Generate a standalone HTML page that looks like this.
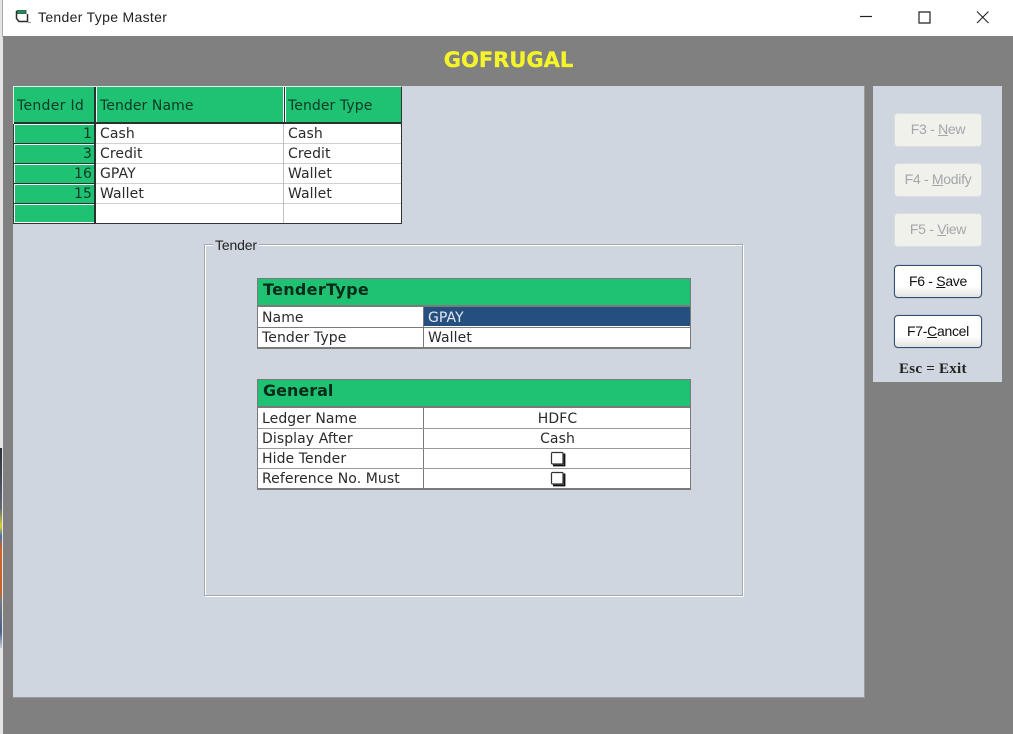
<!DOCTYPE html>
<html><head><meta charset="utf-8"><style>
html,body{margin:0;padding:0;width:1013px;height:734px;overflow:hidden;background:#808080}
div,span{position:absolute;box-sizing:border-box;white-space:nowrap}
.t{font:14px/18px "DejaVu Sans",sans-serif;color:#2a2a2a;height:18px;margin-top:1px;letter-spacing:.08px}
.h{color:#0f3a26}
.g{background:#1fc172}
.l{background:#d0d0d0}
.d{background:#26332c}
.m{background:#7a7a7a}
.b{left:895px;width:86px;height:32px;border-radius:3px;font:14px/31px "Liberation Sans",sans-serif;text-align:center;letter-spacing:-.3px}
.off{background:#f1f1ec;color:#a3a6aa;box-shadow:0 0 0 1px #dcdde0}
.on{left:894px;width:88px;height:33px;border-radius:4px;background:linear-gradient(#fff 65%,#e2e2de);color:#111;border:1px solid #2f4f75;box-shadow:0 0 1px #6d7f95}
u{text-underline-offset:1px}
</style></head><body>
<!-- title bar -->
<div style="left:0;top:0;width:1013px;height:36px;background:#fff"></div>
<div style="left:0;top:0;width:3px;height:734px;background:#e4e4e4"></div>
<div style="left:2px;top:0;width:1px;height:37px;background:#a8a8a8"></div>
<svg style="position:absolute;left:15px;top:9px" width="17" height="15" viewBox="0 0 17 15"><path d="M1.5 2V9.5L4 12.5H12.5V5" fill="#fff" stroke="#2b2b2b" stroke-width="1.5"/><path d="M2 1.5H11V4.5H2Z" fill="#1f8f58" stroke="#1c4a34" stroke-width=".8"/><path d="M13 13.5h3" stroke="#9a9a9a" stroke-width="1.2"/></svg>
<div style="left:38px;top:8px;font:14px/18px 'Liberation Sans',sans-serif;color:#222;letter-spacing:.32px;height:18px">Tender Type Master</div>
<svg style="position:absolute;left:855px;top:5px" width="150" height="26" viewBox="0 0 150 26"><path d="M5 11.5H17" stroke="#222" stroke-width="1.2"/><path d="M64 7h11v11H64Z" fill="none" stroke="#222" stroke-width="1.2"/><path d="M122 6.5l11.5 11.5M133.5 6.5L122 18" stroke="#222" stroke-width="1.1"/></svg>
<!-- left edge artefacts -->
<div style="left:0;top:448px;width:2px;height:200px;background:linear-gradient(#2b3038 0,#3d4650 12%,#5f6872 30%,#d8d030 39%,#4c6ea8 44%,#c9662a 50%,#c8642a 72%,#7a7a7a 76%,#46628f 92%,#ccc 100%)"></div>
<!-- heading -->
<div style="left:380px;top:47px;width:257px;text-align:center;font:bold 21px/27px 'DejaVu Sans',sans-serif;color:#f4f42a;height:27px;-webkit-text-stroke:.3px #f4f42a">GOFRUGAL</div>
<!-- panels -->
<div style="left:13px;top:86px;width:852px;height:612px;background:#d0d6df;border-right:1px solid #9a9a9a;border-bottom:1px solid #9a9a9a"></div>
<div style="left:873px;top:86px;width:129px;height:296px;background:#d0d6df"></div>
<!-- grid -->
<div style="left:13px;top:86px;width:389px;height:138px;background:#fff;border:1px solid #333;border-top-color:#e6ece8;border-left-color:#e6ece8"></div>
<div style="left:13px;top:124px;width:1px;height:100px;background:#2c3a33"></div>
<div class="g" style="left:14px;top:87px;width:80px;height:36px"></div>
<div class="g" style="left:97px;top:87px;width:186px;height:36px"></div>
<div class="g" style="left:286px;top:87px;width:115px;height:36px"></div>
<div class="d" style="left:14px;top:122px;width:387px;height:2px"></div>
<div class="g" style="left:15px;top:125px;width:79px;height:18px"></div>
<div class="g" style="left:15px;top:145px;width:79px;height:18px"></div>
<div class="g" style="left:15px;top:165px;width:79px;height:18px"></div>
<div class="g" style="left:15px;top:185px;width:79px;height:18px"></div>
<div class="g" style="left:15px;top:205px;width:79px;height:17px"></div>
<div class="d" style="left:14px;top:143px;width:81px;height:1px"></div>
<div class="d" style="left:14px;top:163px;width:81px;height:1px"></div>
<div class="d" style="left:14px;top:183px;width:81px;height:1px"></div>
<div class="d" style="left:14px;top:203px;width:81px;height:1px"></div>
<div class="d" style="left:94px;top:87px;width:2px;height:136px"></div>
<div class="d" style="left:284px;top:87px;width:1px;height:36px"></div>
<div class="l" style="left:96px;top:143px;width:305px;height:1px"></div>
<div class="l" style="left:96px;top:163px;width:305px;height:1px"></div>
<div class="l" style="left:96px;top:183px;width:305px;height:1px"></div>
<div class="l" style="left:96px;top:203px;width:305px;height:1px"></div>
<div class="l" style="left:283px;top:124px;width:1px;height:99px;background:#c0c0c0"></div>
<div class="t h" style="left:17px;top:96px;letter-spacing:.3px">Tender Id</div>
<div class="t h" style="left:100px;top:96px">Tender Name</div>
<div class="t h" style="left:288px;top:96px">Tender Type</div>
<div class="t h" style="left:14px;top:124px;width:78px;text-align:right">1</div>
<div class="t h" style="left:14px;top:144px;width:78px;text-align:right">3</div>
<div class="t h" style="left:14px;top:164px;width:78px;text-align:right">16</div>
<div class="t h" style="left:14px;top:184px;width:78px;text-align:right">15</div>
<div class="t" style="left:100px;top:124px">Cash</div>
<div class="t" style="left:100px;top:144px">Credit</div>
<div class="t" style="left:100px;top:164px">GPAY</div>
<div class="t" style="left:100px;top:184px">Wallet</div>
<div class="t" style="left:288px;top:124px">Cash</div>
<div class="t" style="left:288px;top:144px">Credit</div>
<div class="t" style="left:288px;top:164px">Wallet</div>
<div class="t" style="left:288px;top:184px">Wallet</div>
<!-- group box -->
<div style="left:204px;top:244px;width:539px;height:352px;border:1px solid #a4a8ae;box-shadow:1px 1px 0 #fff,inset 1px 1px 0 #fff"></div>
<div style="left:213px;top:237px;width:46px;height:16px;background:#d0d6df;font:14px/16px 'Liberation Sans',sans-serif;color:#222;padding-left:2px;letter-spacing:-.15px">Tender</div>
<!-- TenderType table -->
<div class="m" style="left:257px;top:278px;width:434px;height:71px"></div>
<div class="g" style="left:258px;top:279px;width:432px;height:26px"></div>
<div style="left:258px;top:307px;width:165px;height:40px;background:#fff"></div>
<div style="left:424px;top:307px;width:266px;height:40px;background:#fff"></div>
<div style="left:424px;top:307px;width:266px;height:19px;background:#244f7e"></div>
<div class="m" style="left:258px;top:327px;width:432px;height:1px"></div>
<div style="left:263px;top:279px;font:bold 16px/21px 'DejaVu Sans',sans-serif;color:#0a2a1a;height:21px;letter-spacing:.3px">TenderType</div>
<div class="t" style="left:262px;top:308px">Name</div>
<div class="t" style="left:428px;top:308px;color:#e4e8ee">GPAY</div>
<div class="t" style="left:262px;top:328px">Tender Type</div>
<div class="t" style="left:428px;top:328px">Wallet</div>
<!-- General table -->
<div class="m" style="left:257px;top:379px;width:434px;height:111px"></div>
<div class="g" style="left:258px;top:380px;width:432px;height:26px"></div>
<div style="left:258px;top:408px;width:165px;height:80px;background:#fff"></div>
<div style="left:424px;top:408px;width:266px;height:80px;background:#fff"></div>
<div class="m" style="left:258px;top:428px;width:432px;height:1px;background:#999"></div>
<div class="m" style="left:258px;top:448px;width:432px;height:1px;background:#999"></div>
<div class="m" style="left:258px;top:468px;width:432px;height:1px;background:#999"></div>
<div style="left:263px;top:380px;font:bold 16px/21px 'DejaVu Sans',sans-serif;color:#0a2a1a;height:21px">General</div>
<div class="t" style="left:262px;top:409px">Ledger Name</div>
<div class="t" style="left:262px;top:429px">Display After</div>
<div class="t" style="left:262px;top:449px">Hide Tender</div>
<div class="t" style="left:262px;top:469px">Reference No. Must</div>
<div class="t" style="left:424px;top:409px;width:267px;text-align:center">HDFC</div>
<div class="t" style="left:424px;top:429px;width:267px;text-align:center">Cash</div>
<svg style="position:absolute;left:550px;top:451px" width="16" height="16" viewBox="0 0 16 16"><rect x="1.5" y="1.5" width="11.5" height="11.5" rx="1" fill="#fff" stroke="#333" stroke-width="1.2"/><path d="M14.5 2.5V14.5H3" fill="none" stroke="#111" stroke-width="1.8"/></svg>
<svg style="position:absolute;left:550px;top:471px" width="16" height="16" viewBox="0 0 16 16"><rect x="1.5" y="1.5" width="11.5" height="11.5" rx="1" fill="#fff" stroke="#333" stroke-width="1.2"/><path d="M14.5 2.5V14.5H3" fill="none" stroke="#111" stroke-width="1.8"/></svg>
<!-- buttons -->
<div class="b off" style="top:114px">F3 - <u>N</u>ew</div>
<div class="b off" style="top:164px">F4 - <u>M</u>odify</div>
<div class="b off" style="top:214px">F5 - <u>V</u>iew</div>
<div class="b on" style="top:265px">F6 - <u>S</u>ave</div>
<div class="b on" style="top:315px">F7-<u>C</u>ancel</div>
<div style="left:899px;top:360px;font:bold 15px/18px 'Liberation Serif',serif;color:#222;height:18px;letter-spacing:.25px">Esc = Exit</div>
</body></html>
